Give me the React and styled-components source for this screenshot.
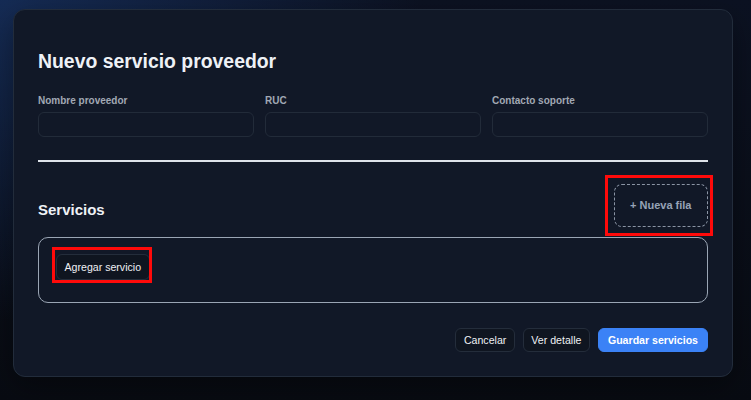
import React from "react";
import styled, { createGlobalStyle } from "styled-components";

const Global = createGlobalStyle`
  html, body { margin: 0; padding: 0; }
  body {
    font-family: "Liberation Sans", Arial, sans-serif;
    background: #090c13;
  }
  * { box-sizing: border-box; }
`;

const Page = styled.div`
  min-height: 400px;
  padding: 9px 18px 23px 13px;
  background:
    radial-gradient(ellipse 420px 320px at 0% 0%, rgba(24, 52, 102, 0.75), rgba(24, 52, 102, 0) 100%),
    linear-gradient(180deg, #0c1222 0%, #080b12 100%);
`;

const Card = styled.section`
  width: 720px;
  border: 1px solid #222c3b;
  border-radius: 12px;
  background: #111827;
  padding: 24px 24px 24px 24px;
  box-shadow: 0 10px 30px rgba(0, 0, 0, 0.35);
`;

const Title = styled.h1`
  margin: 15px 0 0;
  font-size: 19.4px;
  line-height: 24px;
  font-weight: 700;
  color: #eef1f6;
`;

const Fields = styled.div`
  margin-top: 22px;
  display: grid;
  grid-template-columns: repeat(3, 1fr);
  gap: 11px;
`;

const Field = styled.label`
  display: flex;
  flex-direction: column;
  gap: 5px;
`;

const Label = styled.span`
  font-size: 10px;
  line-height: 12px;
  font-weight: 700;
  color: #a1a8b4;
`;

const Input = styled.input`
  height: 25px;
  border: 1px solid #222b39;
  border-radius: 6px;
  background: #111827;
  color: #e5e7eb;
  outline: none;
`;

const Divider = styled.hr`
  margin: 23px 0 0;
  border: 0;
  height: 2px;
  background: #dfe3ea;
`;

const SectionHeader = styled.div`
  margin-top: 22px;
  display: flex;
  align-items: center;
  justify-content: space-between;
`;

const SectionTitle = styled.h2`
  margin: 0;
  padding-top: 8px;
  font-size: 15px;
  line-height: 18px;
  font-weight: 700;
  color: #eef1f6;
`;

const Highlight = styled.div`
  position: relative;
  display: inline-flex;
  &::after {
    content: "";
    position: absolute;
    top: ${(p) => -p.$t}px;
    right: ${(p) => -p.$r}px;
    bottom: ${(p) => -p.$b}px;
    left: ${(p) => -p.$l}px;
    border: 3px solid #ff0a0a;
    pointer-events: none;
  }
`;

const DashedButton = styled.button`
  font-family: inherit;
  height: 43px;
  padding: 0 15.5px;
  border: 1px dashed #8a94a4;
  border-radius: 8px;
  background: transparent;
  color: #97a3b6;
  font-size: 11px;
  line-height: 13px;
  font-weight: 700;
  cursor: pointer;
`;

const ServicesBox = styled.div`
  margin-top: 10px;
  height: 66px;
  padding: 16px 17px;
  border: 1px solid #9aa5b4;
  border-radius: 10px;
  display: flex;
  align-items: flex-start;
`;

const Button = styled.button`
  font-family: inherit;
  font-size: 10.6px;
  line-height: 14px;
  height: ${(p) => (p.$tall ? 26 : 24)}px;
  padding: 0 ${(p) => (p.$primary ? 9 : 7.5)}px;
  border-radius: 6px;
  border: 1px solid ${(p) => (p.$primary ? "#3b82f6" : "#242d3b")};
  background: ${(p) => (p.$primary ? "#3b82f6" : "#0f1520")};
  color: ${(p) => (p.$primary ? "#ffffff" : "#eef0f4")};
  font-weight: ${(p) => (p.$primary ? 700 : 400)};
  cursor: pointer;
  white-space: nowrap;
`;

const Footer = styled.div`
  margin-top: 25px;
  display: flex;
  justify-content: flex-end;
  gap: 8px;
`;

export default function App() {
  return (
    <>
      <Global />
      <Page>
        <Card>
          <Title>Nuevo servicio proveedor</Title>
          <Fields>
            <Field>
              <Label>Nombre proveedor</Label>
              <Input />
            </Field>
            <Field>
              <Label>RUC</Label>
              <Input />
            </Field>
            <Field>
              <Label>Contacto soporte</Label>
              <Input />
            </Field>
          </Fields>
          <Divider />
          <SectionHeader>
            <SectionTitle>Servicios</SectionTitle>
            <Highlight $t={9} $r={5} $b={9} $l={9}>
              <DashedButton>+ Nueva fila</DashedButton>
            </Highlight>
          </SectionHeader>
          <ServicesBox>
            <Highlight $t={7} $r={2} $b={3} $l={4}>
              <Button $tall>Agregar servicio</Button>
            </Highlight>
          </ServicesBox>
          <Footer>
            <Button>Cancelar</Button>
            <Button>Ver detalle</Button>
            <Button $primary>Guardar servicios</Button>
          </Footer>
        </Card>
      </Page>
    </>
  );
}
